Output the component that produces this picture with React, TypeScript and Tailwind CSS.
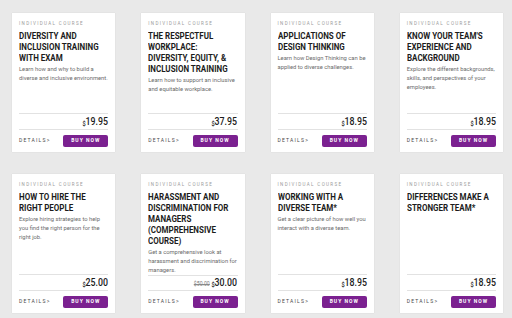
const courses = [
  {
    title: "DIVERSITY AND INCLUSION TRAINING WITH EXAM",
    desc: "Learn how and why to build a diverse and inclusive environment.",
    price: "19.95",
  },
  {
    title: "THE RESPECTFUL WORKPLACE: DIVERSITY, EQUITY, & INCLUSION TRAINING",
    desc: "Learn how to support an inclusive and equitable workplace.",
    price: "37.95",
  },
  {
    title: "APPLICATIONS OF DESIGN THINKING",
    desc: "Learn how Design Thinking can be applied to diverse challenges.",
    price: "18.95",
  },
  {
    title: "KNOW YOUR TEAM'S EXPERIENCE AND BACKGROUND",
    desc: "Explore the different backgrounds, skills, and perspectives of your employees.",
    price: "18.95",
  },
  {
    title: "HOW TO HIRE THE RIGHT PEOPLE",
    desc: "Explore hiring strategies to help you find the right person for the right job.",
    price: "25.00",
  },
  {
    title: "HARASSMENT AND DISCRIMINATION FOR MANAGERS (COMPREHENSIVE COURSE)",
    desc: "Get a comprehensive look at harassment and discrimination for managers.",
    price: "30.00",
    oldPrice: "$50.00",
  },
  {
    title: "WORKING WITH A DIVERSE TEAM*",
    desc: "Get a clear picture of how well you interact with a diverse team.",
    price: "18.95",
  },
  {
    title: "DIFFERENCES MAKE A STRONGER TEAM*",
    desc: "",
    price: "18.95",
  },
]

function CourseCard({ course }: { course: (typeof courses)[number] }) {
  return (
    <div className="flex flex-col bg-white pt-[8px] px-[7px] pb-[5px] h-[139px] shadow-[0_0_1px_rgba(0,0,0,0.12)]">
      <div className="text-[4.5px] leading-[6px] tracking-[1.35px] text-[#9a9a9a] font-['Roboto',sans-serif]">
        INDIVIDUAL COURSE
      </div>
      <div className="mt-[3px]">
        {/* condensed look: lay out wider, then squeeze */}
        <h3 className="w-[119%] origin-left scale-x-[0.84] text-[9.5px] leading-[11px] font-bold text-[#1c1c1c] font-['Roboto',sans-serif]">
          {course.title}
        </h3>
      </div>
      {course.desc && (
        <p className="mt-[2px] text-[5.8px] leading-[9px] text-[#6b6b6b] font-['Roboto',sans-serif]">
          {course.desc}
        </p>
      )}
      <div className="flex-1" />
      <div className="flex items-end justify-end h-[17px] border-y border-[#e2e2e2] pb-[1px]">
        <div className="flex items-end origin-right scale-x-[0.8]">
          {course.oldPrice && (
            <span className="mr-[2px] mb-[1px] text-[6.5px] leading-[7px] text-[#8a8a8a] line-through font-['Roboto',sans-serif]">
              {course.oldPrice}
            </span>
          )}
          <span className="text-[7px] leading-[8px] text-[#1c1c1c] font-medium font-['Roboto',sans-serif]">
            $
          </span>
          <span className="text-[11px] leading-[12px] text-[#1c1c1c] font-medium font-['Roboto',sans-serif]">
            {course.price}
          </span>
        </div>
      </div>
      <div className="mt-[5px] flex items-center justify-between">
        <span className="text-[5px] tracking-[1.2px] text-[#4a4a4a] font-['Roboto',sans-serif]">
          DETAILS&gt;
        </span>
        <button className="w-[45px] h-[12px] rounded-[2px] bg-[#7b2190] text-white text-[5px] font-bold tracking-[1px] font-['Roboto',sans-serif] flex items-center justify-center">
          BUY NOW
        </button>
      </div>
    </div>
  )
}

export default function App() {
  return (
    <div className="w-[512px] h-[318px] bg-[#e9e9e9] overflow-hidden">
      <div className="grid grid-cols-4 gap-x-[26px] gap-y-[22px] pt-[13px] pl-[12px] pr-[9px]">
        {courses.map((c) => (
          <CourseCard key={c.title} course={c} />
        ))}
      </div>
    </div>
  )
}
